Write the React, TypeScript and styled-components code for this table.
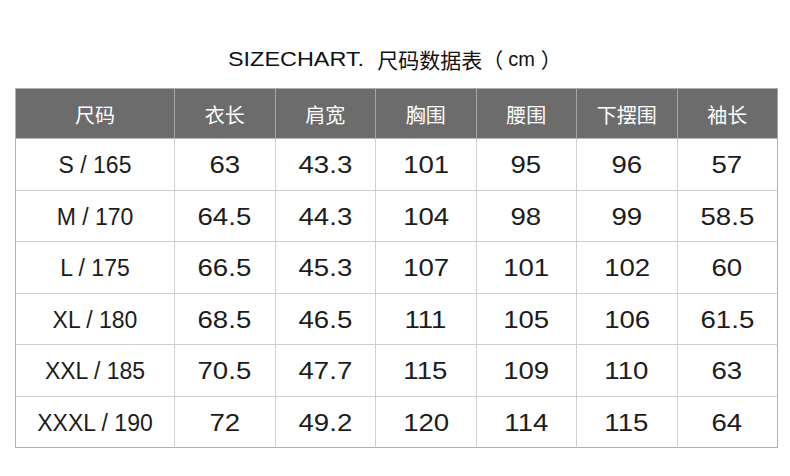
import React from "react";
import styled, { createGlobalStyle } from "styled-components";

const GlobalStyle = createGlobalStyle`
  html, body {
    margin: 0;
    padding: 0;
    background: #fff;
  }
  body {
    font-family: "Liberation Sans", Arial, "Noto Sans CJK SC", sans-serif;
    color: #111;
  }
`;

const Page = styled.div`
  width: 790px;
  height: 476px;
  background: #fff;
  overflow: hidden;
`;

const Title = styled.h1`
  margin: 0;
  padding-top: 47px;
  height: 24px;
  margin-bottom: 17px;
  display: flex;
  justify-content: center;
  align-items: center;
  font-size: 20px;
  line-height: 24px;
  font-weight: normal;
  color: #111;
  white-space: nowrap;
`;

// latin glyphs in the chart are drawn wider than Arial
const Wide = styled.span<{ $w: number; $sx: number }>`
  display: inline-block;
  width: ${(p) => p.$w}px;
  & > span {
    display: inline-block;
    transform: scaleX(${(p) => p.$sx});
    transform-origin: left center;
  }
`;

const TitleCjk = styled.span<{ $gap?: number }>`
  font-family: "Noto Sans CJK SC", sans-serif;
  font-size: 21px;
  margin-left: ${(p) => p.$gap ?? 0}px;
`;

const Unit = styled.span`
  font-size: 20px;
  padding: 0 6px 0 5px;
`;

const Grid = styled.div`
  margin-left: 15px;
  width: 763px;
  height: 360px;
  display: grid;
  grid-template-columns: 159px repeat(6, 1fr);
  grid-template-rows: 50px repeat(6, 1fr);
  border: 1px solid #b0b0b0;
  border-right: none;
  border-bottom: none;
  box-sizing: border-box;
`;

const HeadCell = styled.div`
  background: #6c6c6c;
  color: #fff;
  font-family: "Noto Sans CJK SC", sans-serif;
  font-size: 20px;
  display: flex;
  align-items: center;
  justify-content: center;
  padding-top: 1px;
  border-right: 1px solid #a6a6a6;
  border-bottom: 1px solid #b8b8b8;
  &:last-child {
    border-right-color: #a0a0a0;
  }
`;

const Cell = styled.div<{ $last?: boolean; $bottom?: boolean }>`
  display: flex;
  align-items: center;
  justify-content: center;
  padding-top: 3px;
  font-size: 23px;
  color: #1c1c1c;
  border-right: 1px solid ${(p) => (p.$last ? "#b0b0b0" : "#d0d0d0")};
  border-bottom: 1px solid ${(p) => (p.$bottom ? "#b0b0b0" : "#d0d0d0")};
  white-space: nowrap;
`;

const Num = styled.span`
  display: inline-block;
  transform: scaleX(1.2);
`;

const headers = ["尺码", "衣长", "肩宽", "胸围", "腰围", "下摆围", "袖长"];

const rows = [
  ["S / 165", "63", "43.3", "101", "95", "96", "57"],
  ["M / 170", "64.5", "44.3", "104", "98", "99", "58.5"],
  ["L / 175", "66.5", "45.3", "107", "101", "102", "60"],
  ["XL / 180", "68.5", "46.5", "111", "105", "106", "61.5"],
  ["XXL / 185", "70.5", "47.7", "115", "109", "110", "63"],
  ["XXXL / 190", "72", "49.2", "120", "114", "115", "64"],
];

export default function App() {
  return (
    <Page>
      <GlobalStyle />
      <Title>
        <Wide $w={139} $sx={1.17}>
          <span>SIZECHART.</span>
        </Wide>
        <TitleCjk $gap={10}>尺码数据表（</TitleCjk>
        <Unit>cm</Unit>
        <TitleCjk>）</TitleCjk>
      </Title>
      <Grid>
        {headers.map((h) => (
          <HeadCell key={h}>{h}</HeadCell>
        ))}
        {rows.map((row, r) =>
          row.map((v, i) => (
            <Cell
              key={`${r}-${i}`}
              $last={i === row.length - 1}
              $bottom={r === rows.length - 1}
            >
              {i === 0 ? v : <Num>{v}</Num>}
            </Cell>
          ))
        )}
      </Grid>
    </Page>
  );
}
